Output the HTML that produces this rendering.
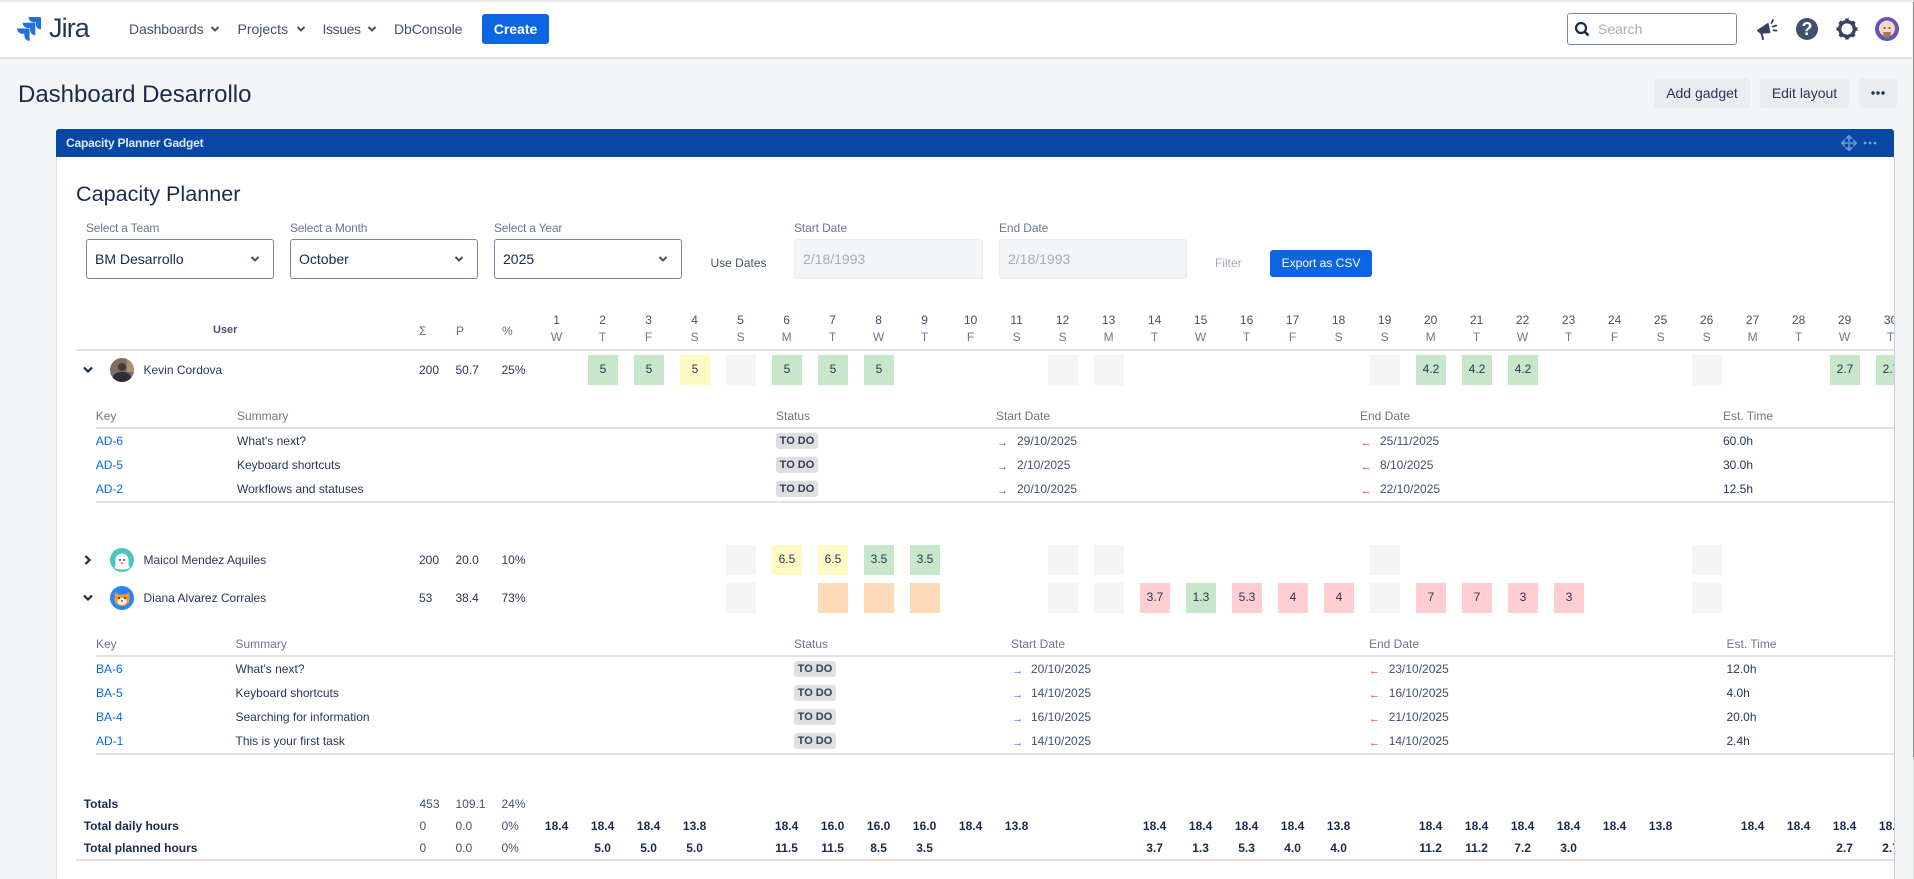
<!DOCTYPE html>
<html lang="en"><head><meta charset="utf-8"><title>Dashboard Desarrollo</title>
<style>
html,body{margin:0;padding:0;width:1914px;height:879px;overflow:hidden;background:#f4f5f7;font-family:"Liberation Sans",Arial,sans-serif;color:#253858}
.a{position:absolute}
.t{position:absolute;white-space:nowrap;line-height:16px;font-size:12px}
.lb{color:#6b778c}
.dk{color:#42526e}
.d{position:absolute;width:46px;text-align:center;font-size:12px;line-height:16px;white-space:nowrap}
.n{color:#42526e;top:312px}.w{color:#6b778c;top:329px}
.c{position:absolute;width:30px;height:30px;line-height:29px;text-align:center;font-size:12px;color:#253858}
.g{background:#c8e6c9}.y{background:#fff9c4}.e{background:#f5f5f5}.o{background:#ffdab9}.p{background:#ffcdd2}
.l{position:absolute;height:2px;background:#dfe1e6}
.b{position:absolute;width:42px;height:16px;background:#dedfe3;border-radius:3px;font-size:11px;font-weight:bold;line-height:17px;text-align:center;color:#344054;white-space:nowrap}
.ar{position:absolute;font-size:11px;line-height:12px;white-space:nowrap}
.bl{color:#1f5fd9}.rd{color:#d92a14}
.k{color:#0c66e4}
.h{position:absolute;font-size:14px;line-height:20px;color:#42526e;white-space:nowrap;top:19px}
.btn{position:absolute;top:78px;height:30px;background:#ebecf0;border-radius:3px;font-size:14px;line-height:30px;text-align:center;color:#253858}
.sel{position:absolute;top:239px;height:38px;border:1px solid #7a869a;border-radius:3px;background:#fff;box-sizing:content-box;font-size:14px;line-height:38px;color:#172b4d;text-indent:8px}
.dis{position:absolute;top:239px;height:38px;border:1px solid #ebecf0;border-radius:3px;background:#f4f5f7;font-size:14px;line-height:38px;color:#a5adba;text-indent:8px}
.tb{position:absolute;width:46px;text-align:center;font-weight:bold;font-size:12px;line-height:16px;color:#172b4d;white-space:nowrap}
svg{position:absolute;display:block}
</style></head><body>
<div class="a" style="left:0;top:0;width:1914px;height:2px;background:#e8e9ec"></div>
<div class="a" style="left:0;top:2px;width:1912px;height:55px;background:#fff;border-bottom:2px solid #dfe1e6"></div>
<div class="a" style="left:1912.5px;top:2px;width:1.5px;height:755px;background:#8c8c8c"></div>
<div class="a" style="left:1912.5px;top:757px;width:1.5px;height:122px;background:#dcdcdc"></div>

<svg style="left:17px;top:17px" width="24" height="24" viewBox="0 0 24 24"><path fill="#1f6fe3" d="M11.571 11.513H0a5.218 5.218 0 0 0 5.232 5.215h2.13v2.057A5.215 5.215 0 0 0 12.575 24V12.518a1.005 1.005 0 0 0-1.005-1.005zm5.723-5.756H5.736a5.215 5.215 0 0 0 5.215 5.214h2.129v2.058a5.218 5.218 0 0 0 5.215 5.214V6.758a1.001 1.001 0 0 0-1.001-1.001zM23.013 0H11.455a5.215 5.215 0 0 0 5.215 5.215h2.129v2.057A5.215 5.215 0 0 0 24 12.483V1.005A1.001 1.001 0 0 0 23.013 0Z"/></svg>
<div class="a" style="left:49px;top:12px;font-size:27px;line-height:32px;color:#253858;letter-spacing:-.9px;white-space:nowrap">Jira</div>

<div class="h" style="left:129px;letter-spacing:-.1px">Dashboards</div>
<svg style="left:210px;top:25px" width="10" height="8" viewBox="0 0 10 8"><path d="M1.5 2l3.5 3.5L8.500 2" fill="none" stroke="#42526e" stroke-width="2"/></svg>
<div class="h" style="left:237.500px">Projects</div>
<svg style="left:296px;top:25px" width="10" height="8" viewBox="0 0 10 8"><path d="M1.5 2l3.5 3.5L8.500 2" fill="none" stroke="#42526e" stroke-width="2"/></svg>
<div class="h" style="left:322.500px;letter-spacing:-.4px">Issues</div>
<svg style="left:367px;top:25px" width="10" height="8" viewBox="0 0 10 8"><path d="M1.5 2l3.5 3.500L8.500 2" fill="none" stroke="#42526e" stroke-width="2"/></svg>
<div class="h" style="left:394px;letter-spacing:-.1px">DbConsole</div>
<div class="a" style="left:482px;top:14px;width:67px;height:30px;background:#0c66e4;border-radius:3px;color:#fff;font-weight:bold;font-size:14px;line-height:30px;text-align:center">Create</div>

<div class="a" style="left:1567px;top:13px;width:168px;height:30px;border:1px solid #7a869a;border-radius:3px;background:#fff"></div>
<svg style="left:1574px;top:21px" width="16" height="16" viewBox="0 0 16 16"><circle cx="7" cy="7" r="5" fill="none" stroke="#172b4d" stroke-width="2.200"/><path d="M10.800 10.800L14.500 14.500" stroke="#172b4d" stroke-width="2.600"/></svg>
<div class="a" style="left:1598px;top:19px;font-size:14px;line-height:20px;color:#a5adba">Search</div>

<svg style="left:1756px;top:18px" width="22" height="22" viewBox="0 0 22 22"><path d="M1.500 12.500L12 5.500l1.800 9-9.300.6z" fill="#344563" stroke="#344563" stroke-width="1.200" stroke-linejoin="round"/><path d="M5.500 15l1.500 6" stroke="#344563" stroke-width="2" stroke-linecap="round"/><path d="M15.500 5l1.500-3M16.800 8.700l3.500-1.200M17.500 12.300l3 .3" stroke="#344563" stroke-width="1.800" stroke-linecap="round"/></svg>
<div class="a" style="left:1796px;top:18px;width:22px;height:22px;border-radius:50%;background:#42526e;color:#fff;font-weight:bold;font-size:18px;line-height:22px;text-align:center">?</div>
<svg style="left:1835px;top:17px" width="24" height="24" viewBox="0 0 24 24"><circle cx="12" cy="12" r="7.300" fill="none" stroke="#344563" stroke-width="3.400"/><g stroke="#344563" stroke-width="3.600"><path d="M12 1.500v3M12 19.500v3M1.500 12h3M19.500 12h3M4.600 4.600l2.200 2.200M17.200 17.200l2.200 2.200M4.600 19.400l2.200-2.200M17.200 6.800l2.200-2.200"/></g></svg>
<svg style="left:1875px;top:17px" width="24" height="24" viewBox="0 0 24 24"><circle cx="12" cy="12" r="12" fill="#6554c0"/><ellipse cx="12" cy="11.500" rx="8" ry="8" fill="#fad7c4"/><path d="M8 15h8l-1.200 5.500H9.200z" fill="#a5794f"/><circle cx="9.500" cy="11" r="1" fill="#42526e"/><circle cx="14.500" cy="11" r="1" fill="#42526e"/></svg>

<div class="a" style="left:18px;top:78px;font-size:24px;line-height:34px;color:#172b4d;white-space:nowrap">Dashboard Desarrollo</div>
<div class="btn" style="left:1654px;width:96px">Add gadget</div>
<div class="btn" style="left:1760px;width:89px">Edit layout</div>
<div class="btn" style="left:1859px;width:38px"></div>
<svg style="left:1870px;top:90px" width="16" height="6" viewBox="0 0 16 6"><circle cx="3" cy="3" r="1.700" fill="#172b4d"/><circle cx="8" cy="3" r="1.700" fill="#172b4d"/><circle cx="13" cy="3" r="1.700" fill="#172b4d"/></svg>

<!-- gadget -->
<div class="a" style="left:55.500px;top:157px;width:1837.500px;height:722px;background:#fff;border-left:1px solid #dfe1e6;border-right:1.500px solid #c9ced6"></div>
<div class="a" style="left:56px;top:129px;width:1838px;height:28px;background:#0747a6;border-radius:3px 3px 0 0"></div>
<div class="a" style="left:66px;top:135px;font-size:12px;font-weight:bold;line-height:16px;color:#deebff;white-space:nowrap;letter-spacing:-.2px">Capacity Planner Gadget</div>
<svg style="left:1841px;top:135px" width="16" height="16" viewBox="0 0 16 16"><path d="M8 1v14M1 8h14M8 .5L5.500 3h5zM8 15.500L5.500 13h5zM.5 8L3 5.500v5zM15.500 8L13 5.500v5z" fill="#6d93cf" stroke="#6d93cf" stroke-width="1.500"/></svg>
<svg style="left:1863px;top:140px" width="14" height="6" viewBox="0 0 14 6"><circle cx="2" cy="3" r="1.400" fill="#7ea0d6"/><circle cx="7" cy="3" r="1.400" fill="#7ea0d6"/><circle cx="12" cy="3" r="1.400" fill="#7ea0d6"/></svg>

<div class="a" style="left:76px;top:181px;font-size:21.600px;line-height:26px;color:#172b4d;white-space:nowrap">Capacity Planner</div>

<div class="t lb" style="left:86px;top:220px;letter-spacing:-.2px">Select a Team</div>
<div class="t lb" style="left:290px;top:220px;letter-spacing:-.2px">Select a Month</div>
<div class="t lb" style="left:494px;top:220px;letter-spacing:-.2px">Select a Year</div>
<div class="t lb" style="left:794px;top:220px;letter-spacing:-.1px">Start Date</div>
<div class="t lb" style="left:999px;top:220px;letter-spacing:-.1px">End Date</div>

<div class="sel" style="left:86px;width:186px">BM Desarrollo</div>
<div class="sel" style="left:290px;width:186px">October</div>
<div class="sel" style="left:494px;width:186px">2025</div>
<svg style="left:250px;top:255px" width="10" height="8" viewBox="0 0 10 8"><path d="M1.500 2l3.500 3.500L8.500 2" fill="none" stroke="#42526e" stroke-width="2"/></svg>
<svg style="left:454px;top:255px" width="10" height="8" viewBox="0 0 10 8"><path d="M1.500 2l3.500 3.500L8.500 2" fill="none" stroke="#42526e" stroke-width="2"/></svg>
<svg style="left:658px;top:255px" width="10" height="8" viewBox="0 0 10 8"><path d="M1.500 2l3.500 3.500L8.500 2" fill="none" stroke="#42526e" stroke-width="2"/></svg>

<div class="t dk" style="left:710.500px;top:255px">Use Dates</div>
<div class="dis" style="left:794px;width:187px">2/18/1993</div>
<div class="dis" style="left:999px;width:186px">2/18/1993</div>
<div class="t" style="left:1215px;top:255px;color:#a5adba">Filter</div>
<div class="a" style="left:1270px;top:250px;width:102px;height:27px;background:#0c66e4;border-radius:3px;color:#fff;font-size:12px;line-height:27px;text-align:center;white-space:nowrap">Export as CSV</div>

<!-- clip region -->
<div class="a" style="left:0;top:0;width:1893.500px;height:879px;overflow:hidden">
<div class="t" style="left:213px;top:322px;font-size:11px;font-weight:bold;color:#42526e">User</div>
<div class="t" style="left:419px;top:322.500px;color:#5e6c84">Σ</div>
<div class="t" style="left:456px;top:322.500px;color:#5e6c84">P</div>
<div class="t" style="left:502px;top:322.500px;color:#5e6c84">%</div>

<div class="d n" style="left:533.600px">1</div><div class="d w" style="left:533.600px">W</div>
<div class="d n" style="left:579.600px">2</div><div class="d w" style="left:579.600px">T</div>
<div class="d n" style="left:625.600px">3</div><div class="d w" style="left:625.600px">F</div>
<div class="d n" style="left:671.600px">4</div><div class="d w" style="left:671.600px">S</div>
<div class="d n" style="left:717.600px">5</div><div class="d w" style="left:717.600px">S</div>
<div class="d n" style="left:763.600px">6</div><div class="d w" style="left:763.600px">M</div>
<div class="d n" style="left:809.600px">7</div><div class="d w" style="left:809.600px">T</div>
<div class="d n" style="left:855.600px">8</div><div class="d w" style="left:855.600px">W</div>
<div class="d n" style="left:901.600px">9</div><div class="d w" style="left:901.600px">T</div>
<div class="d n" style="left:947.600px">10</div><div class="d w" style="left:947.600px">F</div>
<div class="d n" style="left:993.600px">11</div><div class="d w" style="left:993.600px">S</div>
<div class="d n" style="left:1039.600px">12</div><div class="d w" style="left:1039.600px">S</div>
<div class="d n" style="left:1085.600px">13</div><div class="d w" style="left:1085.600px">M</div>
<div class="d n" style="left:1131.600px">14</div><div class="d w" style="left:1131.600px">T</div>
<div class="d n" style="left:1177.600px">15</div><div class="d w" style="left:1177.600px">W</div>
<div class="d n" style="left:1223.600px">16</div><div class="d w" style="left:1223.600px">T</div>
<div class="d n" style="left:1269.600px">17</div><div class="d w" style="left:1269.600px">F</div>
<div class="d n" style="left:1315.600px">18</div><div class="d w" style="left:1315.600px">S</div>
<div class="d n" style="left:1361.600px">19</div><div class="d w" style="left:1361.600px">S</div>
<div class="d n" style="left:1407.600px">20</div><div class="d w" style="left:1407.600px">M</div>
<div class="d n" style="left:1453.600px">21</div><div class="d w" style="left:1453.600px">T</div>
<div class="d n" style="left:1499.600px">22</div><div class="d w" style="left:1499.600px">W</div>
<div class="d n" style="left:1545.600px">23</div><div class="d w" style="left:1545.600px">T</div>
<div class="d n" style="left:1591.600px">24</div><div class="d w" style="left:1591.600px">F</div>
<div class="d n" style="left:1637.600px">25</div><div class="d w" style="left:1637.600px">S</div>
<div class="d n" style="left:1683.600px">26</div><div class="d w" style="left:1683.600px">S</div>
<div class="d n" style="left:1729.600px">27</div><div class="d w" style="left:1729.600px">M</div>
<div class="d n" style="left:1775.600px">28</div><div class="d w" style="left:1775.600px">T</div>
<div class="d n" style="left:1821.600px">29</div><div class="d w" style="left:1821.600px">W</div>
<div class="d n" style="left:1867.600px">30</div><div class="d w" style="left:1867.600px">T</div>

<div class="l" style="left:76px;top:349px;width:1818px"></div>

<!-- Kevin -->
<svg style="left:82px;top:365px" width="12" height="10" viewBox="0 0 12 10"><path d="M2 2.500l4 4 4-4" fill="none" stroke="#172b4d" stroke-width="2.200"/></svg>
<svg style="left:110px;top:358px" width="24" height="24" viewBox="0 0 24 24"><defs><clipPath id="av1"><circle cx="12" cy="12" r="12"/></clipPath></defs><g clip-path="url(#av1)"><rect width="24" height="24" fill="#7d7163"/><rect x="17" width="7" height="14" fill="#a89268"/><path d="M2 24c0-8 4-10 10-10s10 2 10 10z" fill="#2e3037"/><circle cx="12" cy="9" r="4" fill="#4a382d"/></g></svg>
<div class="t" style="left:143.500px;top:361.500px">Kevin Cordova</div>
<div class="t" style="left:419px;top:361.500px">200</div>
<div class="t" style="left:455.500px;top:361.500px">50.7</div>
<div class="t" style="left:501.500px;top:361.500px">25%</div>
<div class="c g" style="left:588px;top:355px">5</div>
<div class="c g" style="left:634px;top:355px">5</div>
<div class="c y" style="left:680px;top:355px">5</div>
<div class="c e" style="left:726px;top:355px"></div>
<div class="c g" style="left:772px;top:355px">5</div>
<div class="c g" style="left:818px;top:355px">5</div>
<div class="c g" style="left:864px;top:355px">5</div>
<div class="c e" style="left:1048px;top:355px"></div>
<div class="c e" style="left:1094px;top:355px"></div>
<div class="c e" style="left:1370px;top:355px"></div>
<div class="c g" style="left:1416px;top:355px">4.2</div>
<div class="c g" style="left:1462px;top:355px">4.2</div>
<div class="c g" style="left:1508px;top:355px">4.2</div>
<div class="c e" style="left:1692px;top:355px"></div>
<div class="c g" style="left:1830px;top:355px">2.7</div>
<div class="c g" style="left:1876px;top:355px">2.7</div>

<!-- Sub table 1 -->
<div class="t lb" style="left:95.700px;top:408px">Key</div>
<div class="t lb" style="left:237px;top:408px">Summary</div>
<div class="t lb" style="left:776px;top:408px">Status</div>
<div class="t lb" style="left:996px;top:408px">Start Date</div>
<div class="t lb" style="left:1360px;top:408px">End Date</div>
<div class="t lb" style="left:1723px;top:408px">Est. Time</div>
<div class="l" style="left:96px;top:427px;width:1798px"></div>

<div class="t k" style="left:95.700px;top:433px">AD-6</div>
<div class="t" style="left:237px;top:433px">What's next?</div>
<div class="b" style="left:776px;top:433px">TO DO</div>
<div class="ar bl" style="left:997px;top:437px">→</div>
<div class="t dk" style="left:1017px;top:433px">29/10/2025</div>
<div class="ar rd" style="left:1361px;top:437px">←</div>
<div class="t dk" style="left:1380px;top:433px">25/11/2025</div>
<div class="t" style="left:1723px;top:433px">60.0h</div>

<div class="t k" style="left:95.700px;top:457px">AD-5</div>
<div class="t" style="left:237px;top:457px">Keyboard shortcuts</div>
<div class="b" style="left:776px;top:457px">TO DO</div>
<div class="ar bl" style="left:997px;top:461px">→</div>
<div class="t dk" style="left:1017px;top:457px">2/10/2025</div>
<div class="ar rd" style="left:1361px;top:461px">←</div>
<div class="t dk" style="left:1380px;top:457px">8/10/2025</div>
<div class="t" style="left:1723px;top:457px">30.0h</div>

<div class="t k" style="left:95.700px;top:481px">AD-2</div>
<div class="t" style="left:237px;top:481px">Workflows and statuses</div>
<div class="b" style="left:776px;top:481px">TO DO</div>
<div class="ar bl" style="left:997px;top:485px">→</div>
<div class="t dk" style="left:1017px;top:481px">20/10/2025</div>
<div class="ar rd" style="left:1361px;top:485px">←</div>
<div class="t dk" style="left:1380px;top:481px">22/10/2025</div>
<div class="t" style="left:1723px;top:481px">12.5h</div>
<div class="l" style="left:96px;top:501px;width:1798px"></div>

<!-- Maicol -->
<svg style="left:83px;top:554px" width="10" height="12" viewBox="0 0 10 12"><path d="M2.500 2l4 4-4 4" fill="none" stroke="#172b4d" stroke-width="2.200"/></svg>
<svg style="left:110px;top:548px" width="24" height="24" viewBox="0 0 24 24"><circle cx="12" cy="12" r="12" fill="#4cc4c0"/><path d="M4 20c1.500-1 1.500-4 1.500-8a6.500 6.500 0 0 1 13 0c0 4 0 7 1.500 8-4.500 2-11.500 2-16 0z" fill="#fff"/><circle cx="10" cy="12" r="1" fill="#344563"/><circle cx="14" cy="12" r="1" fill="#344563"/><path d="M10.500 14.500h3l-1.500 2z" fill="#de350b"/></svg>
<div class="t" style="left:143.500px;top:551.500px">Maicol Mendez Aquiles</div>
<div class="t" style="left:419px;top:551.500px">200</div>
<div class="t" style="left:455.500px;top:551.500px">20.0</div>
<div class="t" style="left:501.500px;top:551.500px">10%</div>
<div class="c e" style="left:726px;top:545px"></div>
<div class="c y" style="left:772px;top:545px">6.5</div>
<div class="c y" style="left:818px;top:545px">6.5</div>
<div class="c g" style="left:864px;top:545px">3.5</div>
<div class="c g" style="left:910px;top:545px">3.5</div>
<div class="c e" style="left:1048px;top:545px"></div>
<div class="c e" style="left:1094px;top:545px"></div>
<div class="c e" style="left:1370px;top:545px"></div>
<div class="c e" style="left:1692px;top:545px"></div>

<!-- Diana -->
<svg style="left:82px;top:593px" width="12" height="10" viewBox="0 0 12 10"><path d="M2 2.500l4 4 4-4" fill="none" stroke="#172b4d" stroke-width="2.200"/></svg>
<svg style="left:110px;top:586px" width="24" height="24" viewBox="0 0 24 24"><circle cx="12" cy="12" r="12" fill="#2684ff"/><path d="M5 6l3.500 2.500h7L19 6l.5 8c0 3.500-3.500 6-7.500 6s-7.500-2.500-7.500-6z" fill="#ff991f"/><ellipse cx="12" cy="15.500" rx="4.500" ry="3.500" fill="#fff"/><circle cx="9" cy="12" r="1" fill="#172b4d"/><circle cx="15" cy="12" r="1" fill="#172b4d"/><circle cx="12" cy="15" r="1" fill="#de350b"/></svg>
<div class="t" style="left:143.500px;top:589.500px">Diana Alvarez Corrales</div>
<div class="t" style="left:419px;top:589.500px">53</div>
<div class="t" style="left:455.500px;top:589.500px">38.4</div>
<div class="t" style="left:501.500px;top:589.500px">73%</div>
<div class="c e" style="left:726px;top:583px"></div>
<div class="c o" style="left:818px;top:583px"></div>
<div class="c o" style="left:864px;top:583px"></div>
<div class="c o" style="left:910px;top:583px"></div>
<div class="c e" style="left:1048px;top:583px"></div>
<div class="c e" style="left:1094px;top:583px"></div>
<div class="c p" style="left:1140px;top:583px">3.7</div>
<div class="c g" style="left:1186px;top:583px">1.3</div>
<div class="c p" style="left:1232px;top:583px">5.3</div>
<div class="c p" style="left:1278px;top:583px">4</div>
<div class="c p" style="left:1324px;top:583px">4</div>
<div class="c e" style="left:1370px;top:583px"></div>
<div class="c p" style="left:1416px;top:583px">7</div>
<div class="c p" style="left:1462px;top:583px">7</div>
<div class="c p" style="left:1508px;top:583px">3</div>
<div class="c p" style="left:1554px;top:583px">3</div>
<div class="c e" style="left:1692px;top:583px"></div>

<!-- Sub table 2 -->
<div class="t lb" style="left:96px;top:636px">Key</div>
<div class="t lb" style="left:235.500px;top:636px">Summary</div>
<div class="t lb" style="left:794px;top:636px">Status</div>
<div class="t lb" style="left:1011px;top:636px">Start Date</div>
<div class="t lb" style="left:1369px;top:636px">End Date</div>
<div class="t lb" style="left:1726.500px;top:636px">Est. Time</div>
<div class="l" style="left:96px;top:655px;width:1798px"></div>

<div class="t k" style="left:96px;top:661px">BA-6</div>
<div class="t" style="left:235.500px;top:661px">What's next?</div>
<div class="b" style="left:794px;top:661px">TO DO</div>
<div class="ar bl" style="left:1012px;top:665px">→</div>
<div class="t dk" style="left:1031px;top:661px">20/10/2025</div>
<div class="ar rd" style="left:1369px;top:665px">←</div>
<div class="t dk" style="left:1388.700px;top:661px">23/10/2025</div>
<div class="t" style="left:1726.500px;top:661px">12.0h</div>

<div class="t k" style="left:96px;top:685px">BA-5</div>
<div class="t" style="left:235.500px;top:685px">Keyboard shortcuts</div>
<div class="b" style="left:794px;top:685px">TO DO</div>
<div class="ar bl" style="left:1012px;top:689px">→</div>
<div class="t dk" style="left:1031px;top:685px">14/10/2025</div>
<div class="ar rd" style="left:1369px;top:689px">←</div>
<div class="t dk" style="left:1388.700px;top:685px">16/10/2025</div>
<div class="t" style="left:1726.500px;top:685px">4.0h</div>

<div class="t k" style="left:96px;top:709px">BA-4</div>
<div class="t" style="left:235.500px;top:709px">Searching for information</div>
<div class="b" style="left:794px;top:709px">TO DO</div>
<div class="ar bl" style="left:1012px;top:713px">→</div>
<div class="t dk" style="left:1031px;top:709px">16/10/2025</div>
<div class="ar rd" style="left:1369px;top:713px">←</div>
<div class="t dk" style="left:1388.700px;top:709px">21/10/2025</div>
<div class="t" style="left:1726.500px;top:709px">20.0h</div>

<div class="t k" style="left:96px;top:733px">AD-1</div>
<div class="t" style="left:235.500px;top:733px">This is your first task</div>
<div class="b" style="left:794px;top:733px">TO DO</div>
<div class="ar bl" style="left:1012px;top:737px">→</div>
<div class="t dk" style="left:1031px;top:733px">14/10/2025</div>
<div class="ar rd" style="left:1369px;top:737px">←</div>
<div class="t dk" style="left:1388.700px;top:733px">14/10/2025</div>
<div class="t" style="left:1726.500px;top:733px">2.4h</div>
<div class="l" style="left:96px;top:753px;width:1798px"></div>

<!-- Totals -->
<div class="t" style="left:83.700px;top:796px;font-weight:bold;color:#172b4d">Totals</div>
<div class="t dk" style="left:419.500px;top:796px">453</div>
<div class="t dk" style="left:455.500px;top:796px">109.1</div>
<div class="t dk" style="left:501.500px;top:796px">24%</div>

<div class="t" style="left:83.700px;top:818px;font-weight:bold;color:#172b4d">Total daily hours</div>
<div class="t dk" style="left:419.500px;top:818px">0</div>
<div class="t dk" style="left:455.500px;top:818px">0.0</div>
<div class="t dk" style="left:501.500px;top:818px">0%</div>
<div class="tb" style="left:533.600px;top:818px">18.4</div>
<div class="tb" style="left:579.600px;top:818px">18.4</div>
<div class="tb" style="left:625.600px;top:818px">18.4</div>
<div class="tb" style="left:671.600px;top:818px">13.8</div>
<div class="tb" style="left:763.600px;top:818px">18.4</div>
<div class="tb" style="left:809.600px;top:818px">16.0</div>
<div class="tb" style="left:855.600px;top:818px">16.0</div>
<div class="tb" style="left:901.600px;top:818px">16.0</div>
<div class="tb" style="left:947.600px;top:818px">18.4</div>
<div class="tb" style="left:993.600px;top:818px">13.8</div>
<div class="tb" style="left:1131.600px;top:818px">18.4</div>
<div class="tb" style="left:1177.600px;top:818px">18.4</div>
<div class="tb" style="left:1223.600px;top:818px">18.4</div>
<div class="tb" style="left:1269.600px;top:818px">18.4</div>
<div class="tb" style="left:1315.600px;top:818px">13.8</div>
<div class="tb" style="left:1407.600px;top:818px">18.4</div>
<div class="tb" style="left:1453.600px;top:818px">18.4</div>
<div class="tb" style="left:1499.600px;top:818px">18.4</div>
<div class="tb" style="left:1545.600px;top:818px">18.4</div>
<div class="tb" style="left:1591.600px;top:818px">18.4</div>
<div class="tb" style="left:1637.600px;top:818px">13.8</div>
<div class="tb" style="left:1729.600px;top:818px">18.4</div>
<div class="tb" style="left:1775.600px;top:818px">18.4</div>
<div class="tb" style="left:1821.600px;top:818px">18.4</div>
<div class="tb" style="left:1867.600px;top:818px">18.4</div>

<div class="t" style="left:83.700px;top:840px;font-weight:bold;color:#172b4d">Total planned hours</div>
<div class="t dk" style="left:419.500px;top:840px">0</div>
<div class="t dk" style="left:455.500px;top:840px">0.0</div>
<div class="t dk" style="left:501.500px;top:840px">0%</div>
<div class="tb" style="left:579.600px;top:840px">5.0</div>
<div class="tb" style="left:625.600px;top:840px">5.0</div>
<div class="tb" style="left:671.600px;top:840px">5.0</div>
<div class="tb" style="left:763.600px;top:840px">11.5</div>
<div class="tb" style="left:809.600px;top:840px">11.5</div>
<div class="tb" style="left:855.600px;top:840px">8.5</div>
<div class="tb" style="left:901.600px;top:840px">3.5</div>
<div class="tb" style="left:1131.600px;top:840px">3.7</div>
<div class="tb" style="left:1177.600px;top:840px">1.3</div>
<div class="tb" style="left:1223.600px;top:840px">5.3</div>
<div class="tb" style="left:1269.600px;top:840px">4.0</div>
<div class="tb" style="left:1315.600px;top:840px">4.0</div>
<div class="tb" style="left:1407.600px;top:840px">11.2</div>
<div class="tb" style="left:1453.600px;top:840px">11.2</div>
<div class="tb" style="left:1499.600px;top:840px">7.2</div>
<div class="tb" style="left:1545.600px;top:840px">3.0</div>
<div class="tb" style="left:1821.600px;top:840px">2.7</div>
<div class="tb" style="left:1867.600px;top:840px">2.7</div>
<div class="l" style="left:76px;top:859px;width:1818px"></div>
</div>
</body></html>
